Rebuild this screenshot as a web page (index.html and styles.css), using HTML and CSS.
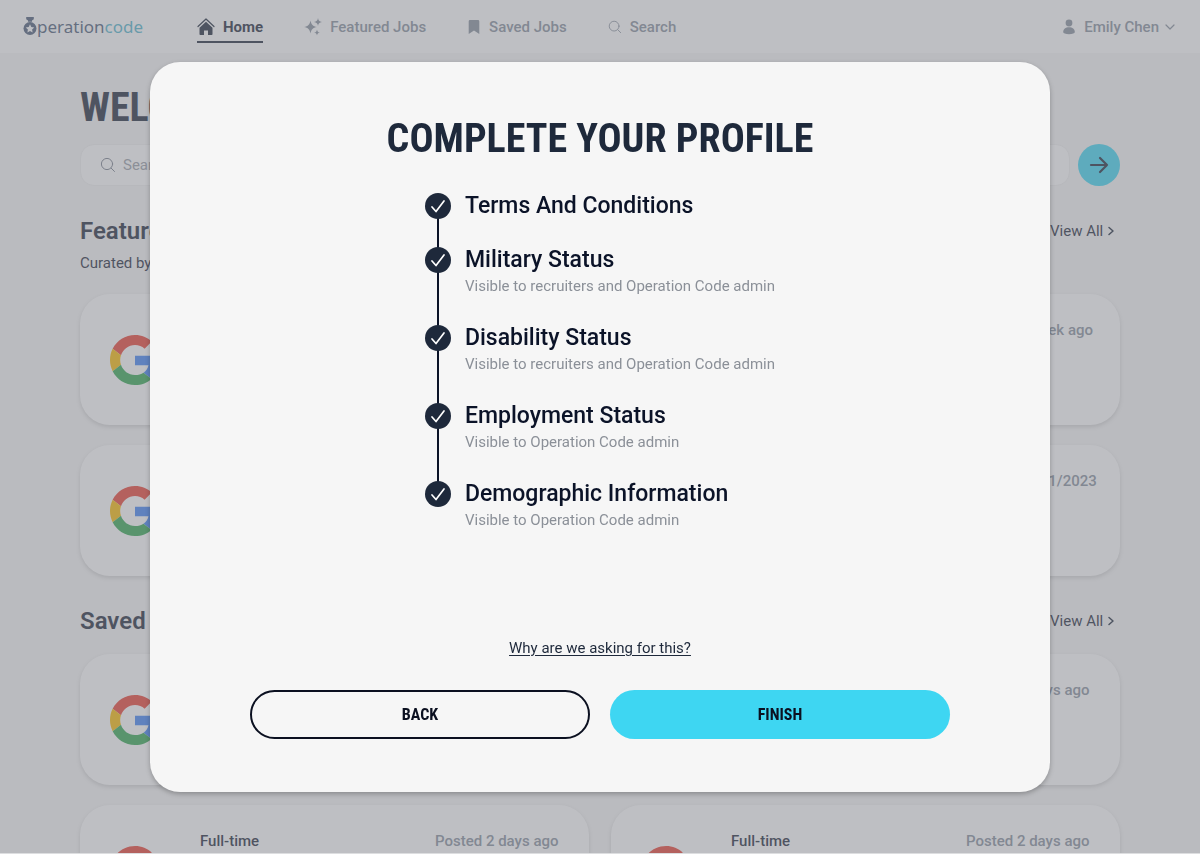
FILE: index.html
```html
<!DOCTYPE html>
<html lang="en">
<head>
  <meta charset="UTF-8">
  <meta name="viewport" content="width=device-width, initial-scale=1">
  <title>Operation Code</title>
  <link rel="stylesheet" href="styles.css">
</head>
<body>

  <svg class="sprite" aria-hidden="true">
    <symbol id="google" viewBox="0 0 48 48">
      <path fill="#EA4335" d="M24 9.5c3.54 0 6.71 1.22 9.21 3.6l6.85-6.85C35.9 2.38 30.47 0 24 0 14.62 0 6.51 5.38 2.56 13.22l7.98 6.19C12.43 13.72 17.74 9.5 24 9.5z"/>
      <path fill="#4285F4" d="M46.98 24.55c0-1.57-.15-3.09-.38-4.55H24v9.02h12.94c-.58 2.96-2.26 5.48-4.78 7.18l7.73 6c4.51-4.18 7.09-10.36 7.09-17.65z"/>
      <path fill="#FBBC05" d="M10.53 28.59c-.48-1.45-.76-2.99-.76-4.59s.27-3.14.76-4.59l-7.98-6.19C.92 16.46 0 20.12 0 24c0 3.88.92 7.54 2.56 10.78l7.97-6.19z"/>
      <path fill="#34A853" d="M24 48c6.48 0 11.93-2.13 15.89-5.81l-7.73-6c-2.15 1.45-4.92 2.3-8.16 2.3-6.26 0-11.57-4.22-13.47-9.91l-7.98 6.19C6.51 42.62 14.62 48 24 48z"/>
    </symbol>
    <symbol id="check" viewBox="0 0 26 26">
      <path d="M7 14l4 4.500L19 8" fill="none" stroke="#fff" stroke-width="1.700" stroke-linecap="round" stroke-linejoin="round"/>
    </symbol>
    <symbol id="magnifier" viewBox="0 0 16 16">
      <g fill="none" stroke="currentColor" stroke-linecap="round"><circle cx="7" cy="7" r="5.600"/><path d="M11.200 11.200L14.500 14.500"/></g>
    </symbol>
    <symbol id="chevron" viewBox="0 0 8 10">
      <path d="M2 1.500L6 5L2 8.500" fill="none" stroke="currentColor" stroke-width="1.500" stroke-linecap="round" stroke-linejoin="round"/>
    </symbol>
  </svg>

  <header class="navbar">
    <a class="logo" href="#">
      <svg width="14" height="19" viewBox="0 0 14 19" aria-hidden="true">
        <path fill="currentColor" d="M3.200 0h7.600v2.200L9 3.500v1.200H5V3.500L3.200 2.200z"/>
        <circle cx="7" cy="11.500" r="6.500" fill="currentColor"/>
        <path fill="#fff" d="M7 7.300l1.300 2.700 3 .4-2.200 2.100.5 2.900L7 14l-2.600 1.400.5-2.900-2.200-2.100 3-.4z"/>
      </svg>
      <span>peration<span class="logo-code">code</span></span>
    </a>
    <nav class="nav-links">
      <a class="nav-link active" href="#">
        <svg width="18" height="18" viewBox="0 0 18 18" aria-hidden="true">
          <path fill="none" stroke="currentColor" stroke-width="1.200" stroke-linecap="round" stroke-linejoin="round" d="M1 8.500L9 1l8 7.500"/>
          <path fill="currentColor" d="M9 3.800l6.500 6v6.400c0 .5-.3.800-.8.800H11v-4.500H7V17H3.300c-.5 0-.8-.3-.8-.8V9.800z"/>
        </svg>
        Home
      </a>
      <a class="nav-link" href="#">
        <svg width="18" height="18" viewBox="0 0 18 18" aria-hidden="true">
          <path fill="currentColor" d="M6.500 2.500c.9 4.200 2.300 5.600 6.500 6.500-4.200.9-5.600 2.300-6.500 6.500C5.600 11.300 4.200 9.900 0 9c4.200-.9 5.600-2.300 6.500-6.500zM14 0c.5 2.700 1.300 3.500 4 4-2.700.5-3.500 1.300-4 4-.5-2.700-1.300-3.500-4-4 2.700-.5 3.500-1.300 4-4zM13 11.500c.4 2.100 1 2.700 3 3-2 .4-2.600 1-3 3-.4-2-1-2.600-3-3 2-.3 2.600-.9 3-3z"/>
        </svg>
        Featured Jobs
      </a>
      <a class="nav-link" href="#">
        <svg width="14" height="16" viewBox="0 0 14 16" aria-hidden="true">
          <path fill="currentColor" d="M3 1h8c.8 0 1.300.6 1.300 1.400V15L7 11.500 1.700 15V2.400C1.700 1.600 2.200 1 3 1z"/>
        </svg>
        Saved Jobs
      </a>
      <a class="nav-link" href="#">
        <svg width="14" height="14" aria-hidden="true"><use href="#magnifier"/></svg>
        Search
      </a>
    </nav>
    <button class="user" type="button">
      <svg width="14" height="16" viewBox="0 0 14 16" aria-hidden="true">
        <circle cx="7" cy="4" r="3.400" fill="currentColor"/>
        <path fill="currentColor" d="M7 8.200c3.500 0 5.800 2 5.800 4.800 0 1.400-2.300 2.200-5.800 2.200S1.200 14.400 1.200 13C1.200 10.200 3.500 8.200 7 8.200z"/>
      </svg>
      Emily Chen
      <svg class="caret" width="10" height="8" viewBox="0 0 10 8" aria-hidden="true"><path d="M1 2l4 4 4-4" fill="none" stroke="currentColor" stroke-width="1.200" stroke-linecap="round" stroke-linejoin="round"/></svg>
    </button>
  </header>

  <main class="page">
    <h1>WELCOME</h1>

    <form class="search">
      <label class="search-box">
        <svg width="16" height="16" aria-hidden="true"><use href="#magnifier"/></svg>
        <input type="search" placeholder="Search" aria-label="Search">
      </label>
      <button class="search-btn" type="button" aria-label="Search jobs">
        <svg width="20" height="20" viewBox="0 0 20 20" aria-hidden="true"><path d="M2 10h16M11 3l7 7-7 7" fill="none" stroke="currentColor" stroke-width="2.200" stroke-linecap="round" stroke-linejoin="round"/></svg>
      </button>
    </form>

    <section class="jobs">
      <div class="jobs-head">
        <h2>Featured Jobs</h2>
        <a href="#">View All <svg width="8" height="10" aria-hidden="true"><use href="#chevron"/></svg></a>
      </div>
      <p class="jobs-note">Curated by Operation Code</p>
      <div class="cards">
        <article class="card">
          <svg class="company" role="img" aria-label="Google"><use href="#google"/></svg>
        </article>
        <article class="card">
          <svg class="company" role="img" aria-label="Google"><use href="#google"/></svg>
          <span class="type">Full-time</span>
          <span class="posted">Posted 1 week ago</span>
        </article>
        <article class="card">
          <svg class="company" role="img" aria-label="Google"><use href="#google"/></svg>
        </article>
        <article class="card">
          <svg class="company" role="img" aria-label="Google"><use href="#google"/></svg>
          <span class="type">Full-time</span>
          <span class="posted">Posted 01/01/2023</span>
        </article>
      </div>
    </section>

    <section class="jobs">
      <div class="jobs-head">
        <h2>Saved Jobs</h2>
        <a href="#">View All <svg width="8" height="10" aria-hidden="true"><use href="#chevron"/></svg></a>
      </div>
      <div class="cards">
        <article class="card">
          <svg class="company" role="img" aria-label="Google"><use href="#google"/></svg>
        </article>
        <article class="card">
          <svg class="company" role="img" aria-label="Google"><use href="#google"/></svg>
          <span class="type">Full-time</span>
          <span class="posted">Posted 2 days ago</span>
        </article>
        <article class="card">
          <svg class="company" role="img" aria-label="Google"><use href="#google"/></svg>
          <span class="type">Full-time</span>
          <span class="posted">Posted 2 days ago</span>
        </article>
        <article class="card">
          <svg class="company" role="img" aria-label="Google"><use href="#google"/></svg>
          <span class="type">Full-time</span>
          <span class="posted">Posted 2 days ago</span>
        </article>
      </div>
    </section>
  </main>

  <div class="overlay">
    <div class="modal" role="dialog" aria-modal="true" aria-labelledby="modal-title">
      <h2 class="modal-title" id="modal-title">COMPLETE YOUR PROFILE</h2>

      <ol class="steps">
        <li class="step">
          <svg class="marker" aria-hidden="true"><use href="#check"/></svg>
          <div class="step-text">
            <h3>Terms And Conditions</h3>
          </div>
        </li>
        <li class="step">
          <svg class="marker" aria-hidden="true"><use href="#check"/></svg>
          <div class="step-text">
            <h3>Military Status</h3>
            <p>Visible to recruiters and Operation Code admin</p>
          </div>
        </li>
        <li class="step">
          <svg class="marker" aria-hidden="true"><use href="#check"/></svg>
          <div class="step-text">
            <h3>Disability Status</h3>
            <p>Visible to recruiters and Operation Code admin</p>
          </div>
        </li>
        <li class="step">
          <svg class="marker" aria-hidden="true"><use href="#check"/></svg>
          <div class="step-text">
            <h3>Employment Status</h3>
            <p>Visible to Operation Code admin</p>
          </div>
        </li>
        <li class="step">
          <svg class="marker" aria-hidden="true"><use href="#check"/></svg>
          <div class="step-text">
            <h3>Demographic Information</h3>
            <p>Visible to Operation Code admin</p>
          </div>
        </li>
      </ol>

      <a class="why" href="#">Why are we asking for this?</a>

      <div class="actions">
        <button class="btn btn-back" type="button">BACK</button>
        <button class="btn btn-finish" type="button">FINISH</button>
      </div>
    </div>
  </div>

</body>
</html>
```
FILE: styles.css
```css
* { box-sizing: border-box; }

body {
  margin: 0;
  height: 100vh;
  overflow: hidden;
  font-family: Roboto, "Liberation Sans", sans-serif;
  font-size: 15px;
  line-height: 20px;
  color: #1e293b;
  background: #f6f6f6;
}

h1, h2, h3, p { margin: 0; }
a { color: inherit; text-decoration: none; }
button, input { font: inherit; color: inherit; }
button { border: none; padding: 0; cursor: pointer; }
svg { flex-shrink: 0; }

.sprite {
  position: absolute;
  width: 0;
  height: 0;
}

/* navbar */
.navbar {
  display: flex;
  align-items: center;
  height: 53px;
  padding: 0 25px 0 23px;
  background: #fff;
  color: #87909d;
  font-weight: 500;
}

.logo {
  display: flex;
  align-items: center;
  width: 174px;
  color: #4c5d78;
  font-family: "Noto Sans", sans-serif;
  font-size: 17px;
  font-weight: 400;
}

.logo-code { color: #53b5cc; }

.nav-links {
  display: flex;
  align-items: center;
  gap: 41px;
}

.nav-link {
  display: flex;
  align-items: center;
  gap: 8px;
}

.nav-link.active {
  padding: 6px 0 4px;
  border-bottom: 2px solid #1e293b;
  color: #1e293b;
  font-weight: 700;
}

.user {
  display: flex;
  align-items: center;
  gap: 8px;
  margin-left: auto;
  background: none;
}

.caret { margin-left: -2px; }

/* page behind the modal */
.page { padding: 31px 80px 0; }

h1, .modal-title {
  font-family: "Roboto Condensed", "Liberation Sans Narrow", sans-serif;
  font-size: 40px;
  line-height: 48px;
  font-weight: 700;
}

.search {
  display: flex;
  gap: 8px;
  margin-top: 12px;
}

.search-box {
  flex: 1;
  display: flex;
  align-items: center;
  gap: 7px;
  height: 42px;
  padding: 0 19px;
  border: 1px solid #f0f0f0;
  border-radius: 14px;
  background: #fff;
  color: #7b828f;
}

.search-box input {
  flex: 1;
  padding: 0;
  border: none;
  background: none;
  outline: none;
}

.search-box input::placeholder { color: #9a9fa8; }

.search-btn {
  display: grid;
  place-items: center;
  width: 42px;
  height: 42px;
  border-radius: 50%;
  background: #3ed6f2;
}

.jobs { margin-top: 30px; }

.jobs-head {
  display: flex;
  justify-content: space-between;
  align-items: center;
  padding-right: 5px;
}

.jobs-head h2 {
  font-size: 24px;
  line-height: 30px;
  font-weight: 600;
}

.jobs-note {
  margin-top: 7px;
  padding-bottom: 3px;
}

.cards {
  display: grid;
  grid-template-columns: 1fr 1fr;
  gap: 20px 22px;
  margin-top: 18px;
}

.card {
  display: flex;
  height: 131px;
  padding: 26px 30px;
  border-radius: 30px;
  background: #fff;
  box-shadow: 0 2px 4px rgba(0, 0, 0, 0.15);
  font-weight: 500;
}

.company {
  align-self: center;
  width: 50px;
  height: 50px;
  margin-right: 40px;
}

.posted {
  width: 124px;
  margin-left: auto;
  white-space: nowrap;
  color: #87909d;
}

/* modal */
.overlay {
  position: fixed;
  inset: 0;
  display: grid;
  place-items: center;
  background: rgba(126, 128, 135, 0.5);
  box-shadow: inset 0 -1px #dddee0;
}

.modal {
  display: flex;
  flex-direction: column;
  align-items: center;
  width: 75%;
  padding: 51px 100px 53px;
  border-radius: 30px;
  background: #f6f6f6;
  box-shadow: 0 2px 5px rgba(0, 0, 0, 0.25);
}

.modal-title { line-height: 52px; }

/* the line runs from the first marker to the last one */
.steps {
  list-style: none;
  margin: 27px 0 0;
  padding: 0;
  background: linear-gradient(#0b1328, #0b1328) 12px 14px / 2px calc(100% - 52px) no-repeat;
}

.step {
  display: grid;
  grid-template-columns: 26px auto;
  column-gap: 14px;
}

.marker {
  width: 26px;
  height: 26px;
  margin-top: 1px;
  border-radius: 50%;
  background: #1e293b;
}

.step-text { padding-bottom: 26px; }
.step:last-child .step-text { padding-bottom: 0; }

.step h3 {
  font-size: 23px;
  line-height: 28px;
  font-weight: 500;
  color: #0b1328;
}

.step p {
  line-height: 24px;
  color: #8b9098;
}

.why {
  margin-top: 106px;
  text-decoration: underline;
  text-underline-offset: 2px;
}

.actions {
  display: grid;
  grid-template-columns: 1fr 1fr;
  gap: 20px;
  width: 100%;
  margin-top: 32px;
}

.btn {
  height: 49px;
  border-radius: 25px;
  font-family: "Roboto Condensed", "Liberation Sans Narrow", sans-serif;
  font-size: 16px;
  font-weight: 700;
  color: #0b1020;
}

.btn-back {
  border: 2px solid #0b1020;
  background: none;
}

.btn-finish { background: #3ed6f2; }
```
